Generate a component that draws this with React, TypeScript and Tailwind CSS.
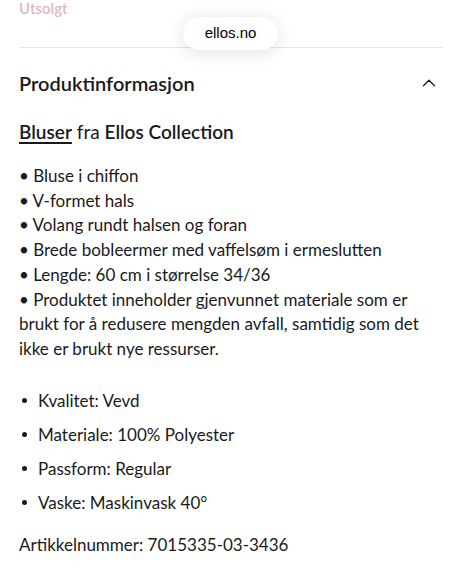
import { ChevronUp } from "lucide-react"

const features = [
  "Bluse i chiffon",
  "V-formet hals",
  "Volang rundt halsen og foran",
  "Brede bobleermer med vaffelsøm i ermeslutten",
  "Lengde: 60 cm i størrelse 34/36",
]

const specs = [
  "Kvalitet: Vevd",
  "Materiale: 100% Polyester",
  "Passform: Regular",
  "Vaske: Maskinvask 40°",
]

export default function App() {
  return (
    <div className="relative h-[575px] w-[462px] overflow-hidden bg-white font-['Lato',sans-serif] text-[#1a1a1a]">
      {/* sold-out label, scrolled mostly out of view */}
      <p className="-mt-[3px] px-[19px] text-[15px] font-semibold leading-[22px] text-[#dcb8c3]">Utsolgt</p>

      {/* browser address pill */}
      <div className="absolute left-[183px] top-[17px] z-10 flex h-[33px] w-[95px] items-center justify-center rounded-full bg-white text-[15px] font-['Liberation_Sans',sans-serif] text-black shadow-[0_2px_18px_rgba(0,0,0,0.12)]">
        ellos.no
      </div>

      <div className="px-[19px]">
        <div className="mt-[28px] border-t border-[#e6e6e6]" />

        <div className="flex items-center justify-between pt-[21px]">
          <h2 className="text-[20px] font-semibold leading-[28px]">Produktinformasjon</h2>
          <ChevronUp className="mr-[3px] h-[22px] w-[22px]" strokeWidth={1.3} />
        </div>

        <p className="mt-[22px] text-[19px] leading-[26px]">
          <span className="font-semibold underline decoration-[1.5px] underline-offset-[3px]">Bluser</span> fra{" "}
          <span className="font-semibold">Ellos Collection</span>
        </p>

        <div className="mt-[19px] text-[17px] leading-[24.7px]">
          {features.map((f) => (
            <p key={f}>• {f}</p>
          ))}
          <p>
            • Produktet inneholder gjenvunnet materiale som er brukt for å redusere mengden avfall, samtidig som det ikke er brukt nye ressurser.
          </p>
        </div>

        <ul className="mt-[27px] flex flex-col gap-[10px] text-[17px] leading-[24px]">
          {specs.map((s) => (
            <li key={s} className="flex items-center">
              <span className="ml-[3px] mr-[11px] h-[5px] w-[5px] rounded-full bg-[#1a1a1a]" />
              {s}
            </li>
          ))}
        </ul>

        <p className="mt-[18px] text-[17px] leading-[24px]">Artikkelnummer: 7015335-03-3436</p>
      </div>
    </div>
  )
}
